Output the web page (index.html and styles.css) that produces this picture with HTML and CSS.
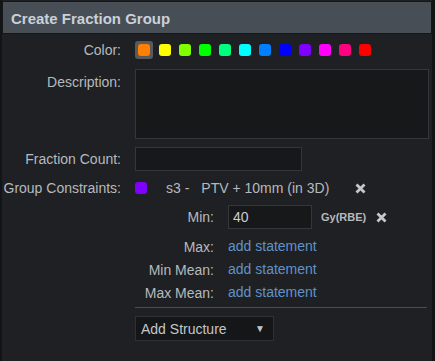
FILE: index.html
```html
<!DOCTYPE html>
<html lang="en">
<head>
    <title>Create Fraction Group</title>
    <link rel="stylesheet" href="styles.css">
</head>
<body>

<div class="panel">
    <div class="panel-header">Create Fraction Group</div>
    <div class="form-grid">
        <label class="field-label">Color:</label>
        <div class="swatches">
            <span class="swatch selected"><i style="background:#ff8000"></i></span>
            <span class="swatch"><i style="background:#ffff00"></i></span>
            <span class="swatch"><i style="background:#80ff00"></i></span>
            <span class="swatch"><i style="background:#00ff00"></i></span>
            <span class="swatch"><i style="background:#00ff80"></i></span>
            <span class="swatch"><i style="background:#00ffff"></i></span>
            <span class="swatch"><i style="background:#0080ff"></i></span>
            <span class="swatch"><i style="background:#0000ff"></i></span>
            <span class="swatch"><i style="background:#8000ff"></i></span>
            <span class="swatch"><i style="background:#ff00ff"></i></span>
            <span class="swatch"><i style="background:#ff0080"></i></span>
            <span class="swatch"><i style="background:#ff0000"></i></span>
        </div>

        <label class="field-label label-top">Description:</label>
        <textarea class="description"></textarea>

        <label class="field-label">Fraction Count:</label>
        <input class="count" type="text">

        <label class="field-label">Group Constraints:</label>
        <div class="constraint-head">
            <span class="struct-dot"></span>
            <span class="struct-id">s3 -</span>
            <span class="struct-name">PTV + 10mm (in 3D)</span>
            <svg class="remove" width="11" height="11" viewBox="0 0 11 11">
                <path d="M1.5 1.5 L9.5 9.5 M9.5 1.5 L1.5 9.5" stroke="#c6c7c9" stroke-width="2.8"/>
            </svg>
        </div>

        <div></div>
        <div class="constraint-grid">
            <label class="field-label min-label">Min:</label>
            <div class="dose-row">
                <input class="dose" type="text" value="40">
                <span class="unit">Gy(RBE)</span>
                <svg class="remove" width="11" height="11" viewBox="0 0 11 11">
                    <path d="M1.5 1.5 L9.5 9.5 M9.5 1.5 L1.5 9.5" stroke="#c6c7c9" stroke-width="2.8"/>
                </svg>
            </div>
            <label class="field-label">Max:</label>
            <a class="add-link" href="#">add statement</a>
            <label class="field-label">Min Mean:</label>
            <a class="add-link" href="#">add statement</a>
            <label class="field-label">Max Mean:</label>
            <a class="add-link" href="#">add statement</a>
        </div>

        <div></div>
        <div class="footer">
            <div class="divider"></div>
            <div class="select-box">
                <span>Add Structure</span>
                <span class="caret">&#9660;</span>
            </div>
        </div>
    </div>
</div>

</body>
</html>
```

FILE: styles.css
```css
body {
    margin: 0;
    background-color: #131416;
    font-family: "Liberation Sans", Arial, sans-serif;
    font-size: 14px;
    color: #b6babe;
}
.panel {
    margin: 0 3px 0 2px;
    height: 361px;
    background-color: #1f2023;
    box-sizing: border-box;
    padding-top: 1px;
}
.panel-header {
    height: 33px;
    box-sizing: border-box;
    border: 1px solid #15161a;
    background-color: #474e55;
    color: #c9d1d9;
    font-weight: bold;
    font-size: 15px;
    padding: 8px 8px;
}
.form-grid {
    display: grid;
    grid-template-columns: 119px 1fr;
    column-gap: 14px;
    row-gap: 8px;
    align-items: center;
    padding-top: 5px;
}
.field-label {
    text-align: right;
}
.label-top {
    align-self: start;
    padding-top: 5px;
}
.swatches {
    display: flex;
    height: 22px;
    align-items: center;
}
.swatch {
    width: 20px;
    height: 18px;
    display: flex;
    align-items: center;
    justify-content: center;
}
.swatch i {
    width: 12px;
    height: 12px;
    border-radius: 3px;
}
.swatch.selected {
    width: 18px;
    margin-right: 2px;
    background-color: #5a5a5c;
    border-radius: 3px;
}
.description {
    margin: 0 3px 0 0;
    height: 70px;
    box-sizing: border-box;
    background-color: #17181a;
    border: 1px solid #34363a;
    resize: none;
}
.count, .dose {
    height: 24px;
    box-sizing: border-box;
    background-color: #17181a;
    border: 1px solid #34363a;
    color: #c9cdd1;
    font-family: inherit;
    font-size: 14px;
    padding: 0 4px;
}
.count {
    width: 167px;
}
.constraint-head {
    display: flex;
    align-items: center;
    height: 18px;
}
.struct-dot {
    width: 12px;
    height: 12px;
    border-radius: 3px;
    background-color: #8000ff;
}
.struct-id {
    margin-left: 19px;
}
.struct-name {
    margin-left: 12px;
}
.remove {
    margin-left: 26px;
}
.constraint-grid {
    display: grid;
    grid-template-columns: 79px auto;
    column-gap: 14px;
    align-items: center;
}
.min-label,
.dose-row {
    padding-bottom: 6px;
}
.dose-row {
    display: flex;
    align-items: center;
    height: 24px;
}
.dose {
    width: 84px;
}
.unit {
    font-size: 11px;
    font-weight: bold;
    margin-left: 9px;
}
.dose-row .remove {
    margin-left: 10px;
}
.add-link {
    color: #5f93c8;
    text-decoration: none;
    line-height: 23px;
}
.footer {
    margin-top: -5px;
    padding-right: 5px;
}
.divider {
    border-top: 1px solid #4a4c50;
    margin-bottom: 8px;
}
.select-box {
    width: 139px;
    height: 25px;
    box-sizing: border-box;
    border: 1px solid #2e3034;
    background-color: #151618;
    display: flex;
    align-items: center;
    justify-content: space-between;
    padding: 0 8px 0 5px;
    color: #c2c6ca;
    font-size: 14px;
}
.caret {
    font-size: 10px;
}
```
